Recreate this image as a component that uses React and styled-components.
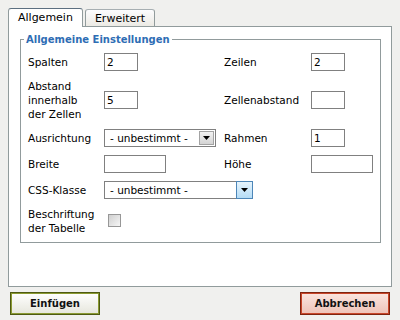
import React from 'react';
import styled, { createGlobalStyle } from 'styled-components';

const GlobalStyle = createGlobalStyle`
  html, body {
    margin: 0;
    padding: 0;
    background: #f0f0ee;
  }
  body {
    font-family: "DejaVu Sans", Verdana, sans-serif;
    font-size: 10.5px;
    color: #000;
  }
`;

const Dialog = styled.div`
  width: 400px;
  height: 320px;
  box-sizing: border-box;
  padding: 8px 8px 0 8px;
`;

const TabBar = styled.div`
  display: flex;
  align-items: flex-end;
  gap: 2px;
  height: 18px;
`;

const Tab = styled.div`
  position: relative;
  z-index: 1;
  display: flex;
  align-items: center;
  box-sizing: border-box;
  padding: 0 9px;
  font-size: 11px;
  border: 1px solid #919b9c;
  border-bottom: none;
  border-radius: 3px 3px 0 0;
  height: ${(p) => (p.$active ? '19px' : '17px')};
  margin-bottom: ${(p) => (p.$active ? '-1px' : '0')};
  padding-bottom: ${(p) => (p.$active ? '1px' : '0')};
  background: ${(p) => (p.$active ? '#fff' : 'linear-gradient(#fcfcfe, #eceae4)')};
  border-top-color: ${(p) => (p.$active ? '#5c6f80' : '#a7afb2')};
  cursor: default;
`;

const Panel = styled.div`
  box-sizing: border-box;
  height: 261px;
  background: #fff;
  border: 1px solid #919b9c;
  padding: 6px 10px 0 11px;
`;

const Fieldset = styled.fieldset`
  margin: 0;
  padding: 7px 10px 7px 7px;
  border: 1px solid #919b9c;
  min-width: 0;
`;

const Legend = styled.legend`
  margin-left: -4px;
  padding: 0 2px;
  font-weight: bold;
  font-size: 10px;
  line-height: 13px;
  color: #2e6db4;
`;

const FormGrid = styled.div`
  display: grid;
  grid-template-columns: 76px 120px 87px 1fr;
  row-gap: 8px;
  align-items: center;
`;

const Label = styled.div`
  line-height: 14px;
`;

const TextInput = styled.input`
  box-sizing: border-box;
  width: ${(p) => p.$w}px;
  height: 18px;
  margin: 0;
  padding: 0 2px;
  border: 1px solid #808080;
  font: inherit;
  color: #000;
  background: #fff;
  outline: none;
`;

const Select = styled.div`
  box-sizing: border-box;
  display: flex;
  align-items: stretch;
  width: ${(p) => p.$w}px;
  height: 18px;
  border: 1px solid #808080;
  background: #fff;
`;

const SelectValue = styled.span`
  flex: 1;
  display: flex;
  align-items: center;
  padding-left: 5px;
  white-space: nowrap;
`;

const Arrow = styled.span`
  box-sizing: border-box;
  display: flex;
  align-items: center;
  justify-content: center;
  width: ${(p) => (p.$blue ? '17px' : '15px')};
  margin: ${(p) => (p.$blue ? '-1px -1px -1px 0' : '1px')};
  border: 1px solid ${(p) => (p.$blue ? '#4d86b8' : '#a3a3a3')};
  background: ${(p) =>
    p.$blue ? 'linear-gradient(#e6f4fd, #b5dcf6)' : 'linear-gradient(#f2f2f2, #d4d4d4)'};
`;

const Check = styled.input.attrs({ type: 'checkbox' })`
  appearance: none;
  box-sizing: border-box;
  width: 13px;
  height: 13px;
  margin: 0 0 0 4px;
  border: 1px solid #979797;
  background: linear-gradient(135deg, #cfcfcf, #f6f6f6);
`;

const ButtonBar = styled.div`
  display: flex;
  justify-content: space-between;
  margin-top: 5px;
  padding: 0 2px;
`;

const ActionButton = styled.button`
  box-sizing: border-box;
  width: 90px;
  height: 23px;
  margin: 0;
  padding: 0;
  font-family: inherit;
  font-size: 10px;
  font-weight: bold;
  color: #111;
  border: 1px solid ${(p) => (p.$cancel ? '#7e2410' : '#4e5a12')};
  box-shadow: inset 0 0 0 1px ${(p) => (p.$cancel ? '#c9462a' : '#8b9a33')};
  background: ${(p) =>
    p.$cancel ? 'linear-gradient(#fbe6e0, #eec2b7)' : 'linear-gradient(#ffffff, #e6e6dc)'};
  cursor: pointer;
`;

const DownArrow = () => (
  <svg width="7" height="4" viewBox="0 0 7 4">
    <polygon points="0,0 7,0 3.5,4" fill="#000" />
  </svg>
);

const Dropdown = ({ width, blue, value }) => (
  <Select $w={width}>
    <SelectValue>{value}</SelectValue>
    <Arrow $blue={blue}>
      <DownArrow />
    </Arrow>
  </Select>
);

const App = () => {
  return (
    <>
      <GlobalStyle />
      <Dialog>
        <TabBar>
          <Tab $active>Allgemein</Tab>
          <Tab>Erweitert</Tab>
        </TabBar>
        <Panel>
          <Fieldset>
            <Legend>Allgemeine Einstellungen</Legend>
            <FormGrid>
              <Label>Spalten</Label>
              <div><TextInput $w={34} defaultValue="2" /></div>
              <Label>Zeilen</Label>
              <div><TextInput $w={34} defaultValue="2" /></div>

              <Label>Abstand<br />innerhalb<br />der Zellen</Label>
              <div><TextInput $w={34} defaultValue="5" /></div>
              <Label>Zellenabstand</Label>
              <div><TextInput $w={34} defaultValue="" /></div>

              <Label>Ausrichtung</Label>
              <Dropdown width={112} value="- unbestimmt -" />
              <Label>Rahmen</Label>
              <div><TextInput $w={34} defaultValue="1" /></div>

              <Label>Breite</Label>
              <div><TextInput $w={62} defaultValue="" /></div>
              <Label>Höhe</Label>
              <div><TextInput $w={62} defaultValue="" /></div>

              <Label>CSS-Klasse</Label>
              <div style={{ gridColumn: '2 / 5' }}>
                <Dropdown width={149} blue value="- unbestimmt -" />
              </div>

              <Label>Beschriftung<br />der Tabelle</Label>
              <div><Check /></div>
            </FormGrid>
          </Fieldset>
        </Panel>
        <ButtonBar>
          <ActionButton>Einfügen</ActionButton>
          <ActionButton $cancel>Abbrechen</ActionButton>
        </ButtonBar>
      </Dialog>
    </>
  );
};

export default App;
